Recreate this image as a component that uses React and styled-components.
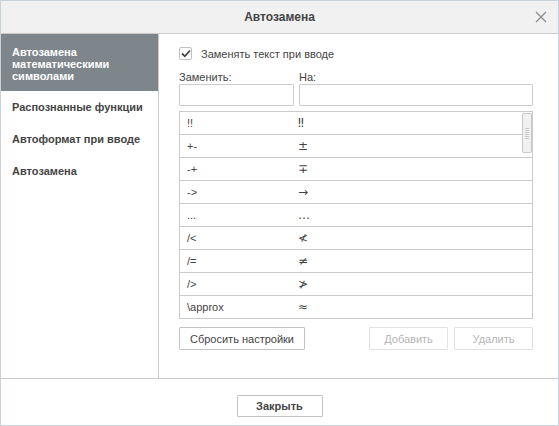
import React, { useState } from "react";
import styled, { createGlobalStyle } from "styled-components";

const Global = createGlobalStyle`
  html, body { margin: 0; padding: 0; background: #fff; }
  body { font-family: Arial, "Liberation Sans", sans-serif; font-size: 11px; color: #444; }
  * { box-sizing: border-box; }
`;

const Window = styled.div`
  width: 559px;
  height: 426px;
  border: 1px solid #c9d1d9;
  display: flex;
  flex-direction: column;
  background: #fff;
`;

const Header = styled.div`
  height: 33px;
  flex: none;
  background: #f1f1f1;
  border-bottom: 1px solid #cbcbcb;
  display: flex;
  align-items: center;
  justify-content: center;
  position: relative;
`;

const Title = styled.div`
  font-weight: bold;
  font-size: 12px;
  color: #444;
`;

const CloseX = styled.button`
  position: absolute;
  right: 11px;
  top: 10px;
  width: 12px;
  height: 12px;
  padding: 0;
  border: 0;
  background: none;
  display: flex;
`;

const Body = styled.div`
  flex: 1;
  display: flex;
  min-height: 0;
`;

const Sidebar = styled.div`
  width: 158px;
  flex: none;
  border-right: 1px solid #cbcbcb;
  display: flex;
  flex-direction: column;
`;

const NavItem = styled.div`
  font-weight: bold;
  font-size: 11px;
  line-height: 12px;
  padding: ${(p) => (p.$active ? "12px 11px 9px" : "10px 11px")};
  background: ${(p) => (p.$active ? "#7e868c" : "transparent")};
  color: ${(p) => (p.$active ? "#fff" : "#444")};
  ${(p) => (p.$active ? "" : "height: 32px;")}
`;

const Content = styled.div`
  flex: 1;
  padding: 13px 0 0 20px;
  display: flex;
  flex-direction: column;
`;

const Pane = styled.div`
  width: 354px;
  display: flex;
  flex-direction: column;
`;

const CheckRow = styled.label`
  display: flex;
  align-items: center;
  gap: 9px;
  height: 13px;
  font-size: 11px;
`;

const Box = styled.span`
  width: 13px;
  height: 13px;
  border: 1px solid #c0c0c0;
  border-radius: 2px;
  display: flex;
  align-items: center;
  justify-content: center;
`;

const Fields = styled.div`
  display: grid;
  grid-template-columns: 115px 1fr;
  column-gap: 5px;
  margin-top: 10px;
`;

const FieldLabel = styled.div`
  font-size: 11px;
  height: 14px;
  line-height: 14px;
`;

const Input = styled.input`
  height: 22px;
  border: 1px solid #cbcbcb;
  border-radius: 1px;
  outline: none;
  font: inherit;
  padding: 0 5px;
  width: 100%;
`;

const Table = styled.div`
  margin-top: 5px;
  border: 1px solid #cbcbcb;
  position: relative;
`;

const Row = styled.div`
  display: grid;
  grid-template-columns: 111px 1fr;
  height: ${(p) => (p.$first ? 22 : 23)}px;
  align-items: center;
  border-top: ${(p) => (p.$first ? "0" : "1px solid #cbcbcb")};
  font-size: 11px;
`;

const Cell = styled.div`
  padding-left: 7px;
  color: #444;
`;

const Sym = styled(Cell)`
  font-family: "DejaVu Sans", sans-serif;
  font-size: 12px;
`;

const Thumb = styled.div`
  position: absolute;
  right: 0px;
  top: 1px;
  width: 10px;
  height: 40px;
  background: #f1f1f1;
  border: 1px solid #c8c8c8;
  border-radius: 2px;
  display: flex;
  flex-direction: column;
  justify-content: center;
  align-items: center;
  gap: 1px;
`;

const Grip = styled.span`
  width: 4px;
  height: 1px;
  background: #c8c8c8;
`;

const ButtonRow = styled.div`
  display: flex;
  margin-top: 8px;
  gap: 6px;
`;

const Button = styled.button`
  height: 23px;
  padding: 0 8px;
  min-width: ${(p) => p.$w || 79}px;
  background: #fff;
  border: 1px solid ${(p) => (p.disabled ? "#e2e2e2" : "#c3c3c3")};
  border-radius: 1px;
  font-family: Arial, "Liberation Sans", sans-serif;
  font-size: 11px;
  color: ${(p) => (p.disabled ? "#b5b5b5" : "#444")};
  ${(p) => (p.$push ? "margin-left: auto;" : "")}
`;

const Footer = styled.div`
  height: 47px;
  flex: none;
  border-top: 1px solid #cbcbcb;
  display: flex;
  justify-content: center;
  padding-top: 16px;
`;

const CloseButton = styled(Button)`
  width: 86px;
  height: 22px;
  font-weight: bold;
  font-size: 11px;
  border-color: #c3c3c3;
`;

const rows = [
  ["!!", "\u203C"],
  ["+-", "\u00B1"],
  ["-+", "\u2213"],
  ["->", "\u2192"],
  ["...", "\u2026"],
  ["/<", "\u226E"],
  ["/=", "\u2260"],
  ["/>", "\u226F"],
  ["\\approx", "\u2248"],
];

const nav = [
  "Автозамена математическими символами",
  "Распознанные функции",
  "Автоформат при вводе",
  "Автозамена",
];

export default function App() {
  const [active, setActive] = useState(0);
  return (
    <>
      <Global />
      <Window>
        <Header>
          <Title>Автозамена</Title>
          <CloseX aria-label="close">
            <svg width="12" height="12" viewBox="0 0 12 12">
              <path d="M1 1L11 11M11 1L1 11" stroke="#8a8a8a" strokeWidth="1.2" />
            </svg>
          </CloseX>
        </Header>
        <Body>
          <Sidebar>
            {nav.map((n, i) => (
              <NavItem key={n} $active={i === active} onClick={() => setActive(i)}>
                {i === 0 ? (
                  <>
                    Автозамена
                    <br />
                    математическими
                    <br />
                    символами
                  </>
                ) : (
                  n
                )}
              </NavItem>
            ))}
          </Sidebar>
          <Content>
            <Pane>
              <CheckRow>
                <Box>
                  <svg width="10" height="9" viewBox="0 0 10 9">
                    <path d="M1 4.5L3.8 7.3L9 1.5" fill="none" stroke="#444" strokeWidth="1.8" />
                  </svg>
                </Box>
                Заменять текст при вводе
              </CheckRow>
              <Fields>
                <FieldLabel>Заменить:</FieldLabel>
                <FieldLabel>На:</FieldLabel>
                <Input />
                <Input />
              </Fields>
              <Table>
                {rows.map(([a, b], i) => (
                  <Row key={a} $first={i === 0}>
                    <Cell>{a}</Cell>
                    <Sym>{b}</Sym>
                  </Row>
                ))}
                <Thumb>
                  {Array.from({ length: 6 }).map((_, i) => (
                    <Grip key={i} />
                  ))}
                </Thumb>
              </Table>
              <ButtonRow>
                <Button $w={126}>Сбросить настройки</Button>
                <Button $push disabled>
                  Добавить
                </Button>
                <Button disabled>Удалить</Button>
              </ButtonRow>
            </Pane>
          </Content>
        </Body>
        <Footer>
          <CloseButton>Закрыть</CloseButton>
        </Footer>
      </Window>
    </>
  );
}
